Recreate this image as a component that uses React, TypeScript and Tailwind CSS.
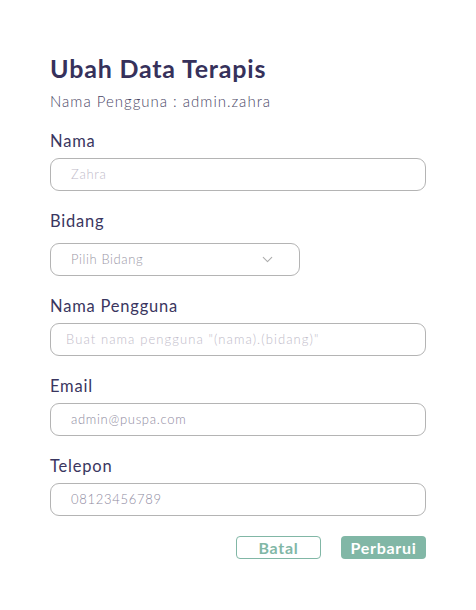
import { ChevronDown } from "lucide-react"

const font = { fontFamily: "Lato, 'Open Sans', sans-serif" }

function Field({ label, value, muted }: { label: string; value: string; muted?: boolean }) {
  return (
    <div className="flex flex-col">
      <label className="text-[16.5px] leading-[22px] tracking-[0.8px] text-[#3a3660]">{label}</label>
      <div className="mt-[6px] h-[33px] w-full rounded-[9px] border border-[#b4b4b4] flex items-center pl-[20px]">
        <span className={`text-[13px] font-light tracking-[0.7px] ${muted ? "text-[#c0bbc9]" : "text-[#8e8aa0]"}`}>{value}</span>
      </div>
    </div>
  )
}

export default function App() {
  return (
    <div className="min-h-screen w-[476px] bg-white px-[50px] pt-[52px]" style={font}>
      <h1 className="text-[25px] leading-[32px] font-bold tracking-[0.8px] text-[#36315b]">Ubah Data Terapis</h1>
      <p className="mt-[7px] text-[15px] leading-[20px] font-light tracking-[1px] text-[#4a4766]">Nama Pengguna : admin.zahra</p>

      <div className="mt-[19px] flex flex-col gap-[19px]">
        <Field label="Nama" value="Zahra" muted />

        <div className="flex flex-col">
          <label className="text-[16.5px] leading-[22px] tracking-[0.8px] text-[#3a3660]">Bidang</label>
          <div className="mt-[11px] h-[33px] w-[250px] rounded-[9px] border border-[#b4b4b4] flex items-center justify-between pl-[20px] pr-[23px]">
            <span className="text-[13px] font-light tracking-[0.6px] text-[#9a97a6]">Pilih Bidang</span>
            <ChevronDown size={17} strokeWidth={1.5} className="text-[#adadad]" />
          </div>
        </div>

        <div className="flex flex-col">
          <label className="text-[16.5px] leading-[22px] tracking-[0.8px] text-[#3a3660]">Nama Pengguna</label>
          <div className="mt-[6px] h-[33px] w-full rounded-[9px] border border-[#b4b4b4] flex items-center pl-[15px]">
            <span className="text-[13px] font-light tracking-[1.1px] text-[#c0bbc9]">Buat nama pengguna "(nama).(bidang)"</span>
          </div>
        </div>

        <Field label="Email" value="admin@puspa.com" />
        <Field label="Telepon" value="08123456789" />
      </div>

      <div className="mt-[20px] flex justify-end gap-[20px]">
        <button className="h-[23px] w-[85px] rounded-[4px] border border-[#81b7a6] text-[16px] font-bold tracking-[0.7px] text-[#81b7a6] leading-none">
          Batal
        </button>
        <button className="h-[23px] w-[85px] rounded-[4px] bg-[#81b7a6] text-[16px] font-bold tracking-[0.7px] text-white leading-none">
          Perbarui
        </button>
      </div>
    </div>
  )
}
